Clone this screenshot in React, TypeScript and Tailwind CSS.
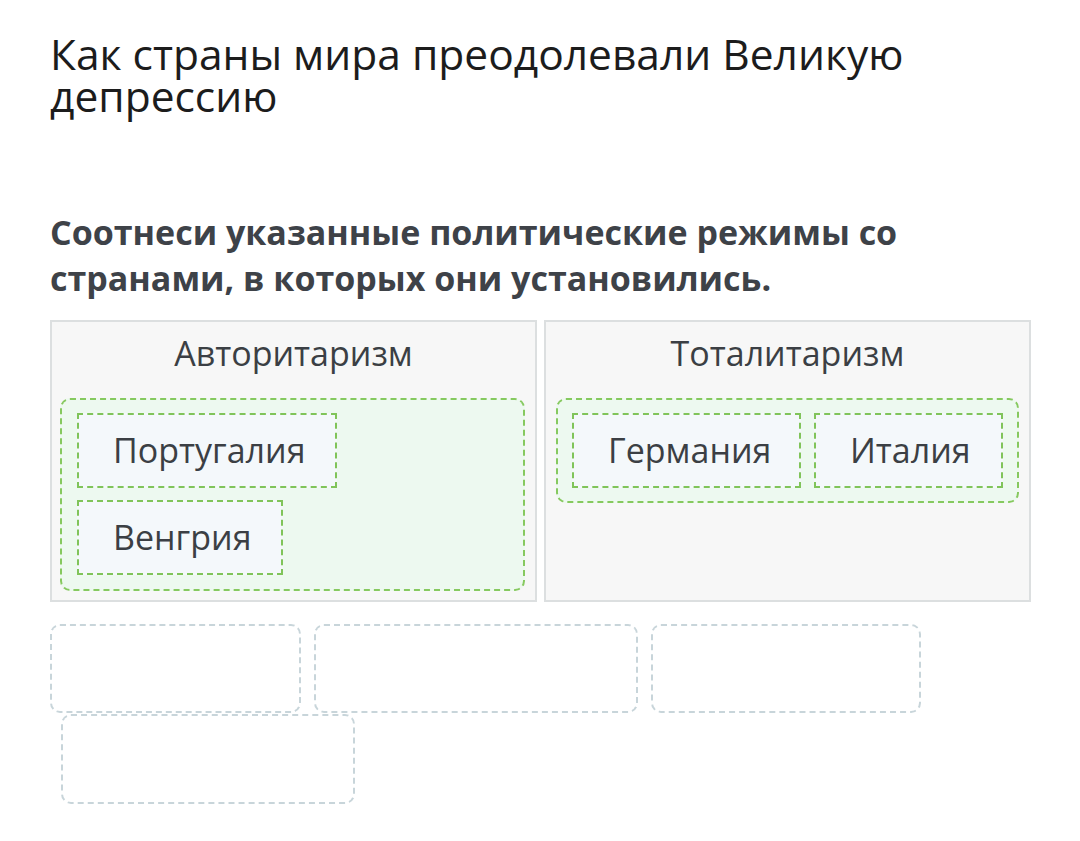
import React from "react";

const font = { fontFamily: '"Open Sans", "Noto Sans", sans-serif' };

function Item({ label, w }: { label: string; w: string }) {
  return (
    <div
      className={`h-[75px] ${w} flex items-center pl-[34px] bg-[#f4f8fb] border-2 border-dashed border-[#80c45a] text-[34px] text-[#3b3f44]`}
    >
      {label}
    </div>
  );
}

export default function App() {
  return (
    <div className="w-[1080px] h-[841px] bg-white overflow-hidden" style={font}>
      <div className="pl-[50px] pt-[33px]">
        <h1 className="text-[42.5px] leading-[42px] text-[#1c1c1c] font-normal w-[960px]">
          Как страны мира преодолевали Великую депрессию
        </h1>
        <p className="mt-[92px] text-[34px] leading-[46px] font-bold text-[#3e4248] w-[960px]">
          Соотнеси указанные политические режимы со
          <br />
          странами, в которых они установились.
        </p>
      </div>

      <div className="flex gap-[7px] pl-[50px] mt-[19px]">
        <div className="w-[487px] h-[282px] border-2 border-[#dcdfe0] bg-[#f7f7f7] flex flex-col">
          <div className="h-[76px] pb-[13px] flex items-center justify-center text-[34px] text-[#3b3f44]">
            Авторитаризм
          </div>
          <div className="ml-[8px] mr-[10px] h-[193px] rounded-[10px] border-2 border-dashed border-[#86c95f] bg-[#edf9f0] pl-[15px] pt-[13px] flex flex-col gap-[12px]">
            <Item label="Португалия" w="w-[260px]" />
            <Item label="Венгрия" w="w-[206px]" />
          </div>
        </div>
        <div className="w-[487px] h-[282px] border-2 border-[#dcdfe0] bg-[#f7f7f7] flex flex-col">
          <div className="h-[76px] pb-[13px] flex items-center justify-center text-[34px] text-[#3b3f44]">
            Тоталитаризм
          </div>
          <div className="ml-[10px] mr-[10px] h-[105px] rounded-[10px] border-2 border-dashed border-[#86c95f] bg-[#edf9f0] pl-[14px] pt-[13px] flex gap-[13px]">
            <Item label="Германия" w="w-[229px]" />
            <Item label="Италия" w="w-[189px]" />
          </div>
        </div>
      </div>

      <div className="pl-[50px] mt-[22px]">
        <div className="flex gap-[13px]">
          <div className="w-[251px] h-[89px] rounded-[10px] border-2 border-dashed border-[#c8d5da]" />
          <div className="w-[324px] h-[89px] rounded-[10px] border-2 border-dashed border-[#c8d5da]" />
          <div className="w-[270px] h-[89px] rounded-[10px] border-2 border-dashed border-[#c8d5da]" />
        </div>
        <div className="ml-[11px] mt-[1px] w-[294px] h-[90px] rounded-[10px] border-2 border-dashed border-[#c8d5da]" />
      </div>
    </div>
  );
}
